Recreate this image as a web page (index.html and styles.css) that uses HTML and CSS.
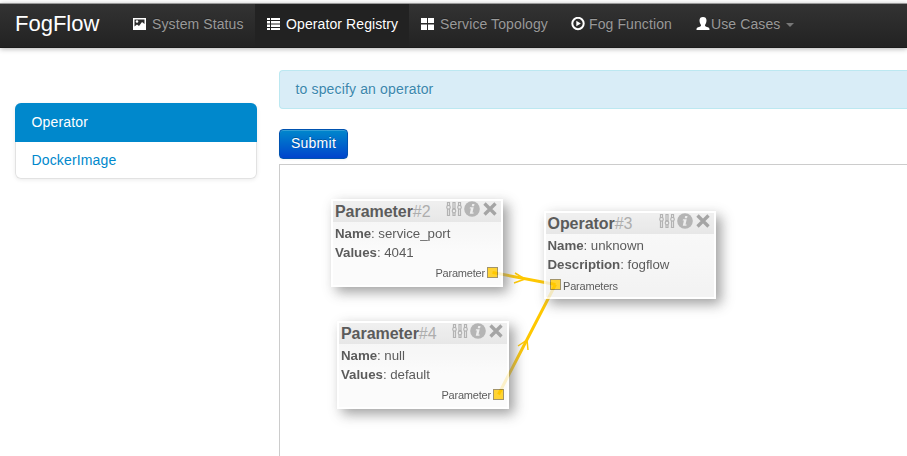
FILE: index.html
```html
<!DOCTYPE html>
<html lang="en">
<head>
<meta charset="utf-8">
<title>FogFlow</title>
<link rel="stylesheet" href="styles.css">
</head>
<body>
<svg class="defs" width="0" height="0">
  <symbol id="tools" viewBox="0 0 16 16">
    <g fill="none" stroke="#a0a0a0" stroke-width="1.200">
      <path d="M1.500 1.500h2v3h-2zM1.500 8v6.500h2V8M7 1.500h2v6H7zM7 12v2.500h2V12M12.500 1.500h2v3h-2zM12.500 8v6.500h2V8"/>
      <circle cx="2.500" cy="6.300" r="1.800"/><circle cx="8" cy="10" r="1.800"/><circle cx="13.500" cy="6.300" r="1.800"/>
    </g>
  </symbol>
  <symbol id="info" viewBox="0 0 16 16">
    <circle cx="8" cy="8" r="7.800" fill="#a3a3a3"/>
    <path d="M8.200 3h2.300l-.5 2.200H7.700zM6 6.300h3.700L8.500 11.500h1.200l-.3 1.200H5.800l1.100-5.100H5.700z" fill="#e9e9e9"/>
  </symbol>
  <symbol id="close" viewBox="0 0 16 16">
    <path d="M2.500 2.500l11 11M13.500 2.500L2.500 13.500" stroke="#8f8f8f" stroke-width="3.300"/>
  </symbol>
</svg>
<header class="navbar">
  <a class="brand">FogFlow</a>
  <nav class="nav">
    <a class="nav-item"><svg class="icon" viewBox="0 0 14 14"><path fill="#fff" fill-rule="evenodd" d="M0 1h13v12H0zM1.500 2.500v7l2.500-2 2 1.500 3-4 2.500 2V2.500z"/><circle cx="4" cy="4.500" r="1.300" fill="#fff"/></svg><span class="label status">System Status</span></a>
    <a class="nav-item active"><svg class="icon" viewBox="0 0 14 14"><path fill="#fff" d="M0 1h3v2H0zM4 1h9v2H4zM0 4h3v2.500H0zM4 4h9v2.500H4zM0 7.500h3V10H0zM4 7.500h9V10H4zM0 11h3v2H0zM4 11h9v2H4z"/></svg><span class="label registry">Operator Registry</span></a>
    <a class="nav-item"><svg class="icon" viewBox="0 0 14 14"><path fill="#fff" d="M0 1h6v5H0zM7 1h6v5H7zM0 7.500h6V13H0zM7 7.500h6V13H7z"/></svg><span class="label topology">Service Topology</span></a>
    <a class="nav-item"><svg class="icon" viewBox="0 0 14 14"><circle cx="7" cy="6.500" r="5.700" fill="none" stroke="#fff" stroke-width="2"/><path d="M5.300 3.700v5.600l4.500-2.800z" fill="#fff"/></svg><span class="label function">Fog Function</span></a>
    <a class="nav-item user"><svg class="icon" viewBox="0 0 14 14"><path fill="#fff" d="M3.500 3.500C3.500 1 4.800 0 7 0s3.500 1 3.500 3.500C10.500 6 9.500 7 9 8c-.3 1.500 1.500 1.800 3 2.200 1.300.5 1.500 1.300 1.500 2.800H.5c0-1.500.2-2.300 1.500-2.800C3.500 9.800 5.300 9.500 5 8 4.500 7 3.500 6 3.500 3.500z"/></svg><span class="label cases">Use Cases</span><span class="caret"></span></a>
  </nav>
</header>
<div class="page">
  <aside class="sidebar">
    <a class="side-item selected">Operator</a>
    <a class="side-item">DockerImage</a>
  </aside>
  <main class="content">
    <div class="alert">to specify an operator</div>
    <button class="submit">Submit</button>
    <div class="board">
      <svg class="wires" width="628" height="292" viewBox="279 164 628 292">
        <g fill="none" stroke="#ffc800">
          <path stroke-width="3" d="M492.500 272.500L555.500 284.500M498.500 394.500L555.500 284.500"/>
          <path stroke-width="1.500" d="M515 273l10 6-11 4M518 346l9-6 1 10"/>
        </g>
      </svg>
      <section class="node node-2">
        <div class="node-head"><b>Parameter</b><span class="num">#2</span><span class="tools"><svg><use href="#tools"/></svg><svg><use href="#info"/></svg><svg><use href="#close"/></svg></span></div>
        <div class="row"><b>Name</b>: service_port</div>
        <div class="row"><b>Values</b>: 4041</div>
        <div class="port out">Parameter<i class="pin"></i></div>
      </section>
      <section class="node node-3">
        <div class="node-head"><b>Operator</b><span class="num">#3</span><span class="tools"><svg><use href="#tools"/></svg><svg><use href="#info"/></svg><svg><use href="#close"/></svg></span></div>
        <div class="row"><b>Name</b>: unknown</div>
        <div class="row"><b>Description</b>: fogflow</div>
        <div class="port in"><i class="pin"></i>Parameters</div>
      </section>
      <section class="node node-4">
        <div class="node-head"><b>Parameter</b><span class="num">#4</span><span class="tools"><svg><use href="#tools"/></svg><svg><use href="#info"/></svg><svg><use href="#close"/></svg></span></div>
        <div class="row"><b>Name</b>: null</div>
        <div class="row"><b>Values</b>: default</div>
        <div class="port out">Parameter<i class="pin"></i></div>
      </section>
    </div>
  </main>
</div>
</body>
</html>
```
FILE: styles.css
```css
* { box-sizing: border-box; }
body {
  margin: 0;
  height: 456px;
  overflow: hidden;
  background: #fff;
  font: 14px/20px "Liberation Sans", Arial, sans-serif;
  color: #333;
}
.defs { position: absolute; }
.navbar {
  display: flex;
  margin-top: 3px;
  height: 45px;
  border-top: 1px solid #999;
  border-bottom: 1px solid #1b1b1b;
  background: linear-gradient(#333, #222);
  box-shadow: 0 1px 5px rgba(0, 0, 0, .3);
}
.brand {
  width: 118px;
  padding: 10px 0 0 15px;
  font-size: 22px;
  color: #fff;
}
.nav { display: flex; }
.nav-item {
  display: flex;
  align-items: flex-start;
  padding: 10px 12px 0 15px;
  color: #999;
  letter-spacing: .1px;
  text-shadow: 0 -1px 0 rgba(0, 0, 0, .25);
}
.nav-item.active {
  padding-left: 12px;
  color: #fff;
  background: #222;
}
.nav-item.active + .nav-item { padding-left: 12px; }
.icon { width: 14px; height: 14px; margin-top: 3px; flex: none; }
.label { margin-left: 5px; white-space: nowrap; }
.status { width: 91px; }
.registry { width: 111px; }
.topology { width: 104px; }
.function { width: 84px; margin-left: 4px; }
.cases { width: 71px; margin-left: 1px; }
.nav-item.user { padding-left: 11px; }
.caret {
  margin: 9px 0 0 4px;
  border: 4px solid transparent;
  border-top-color: #777;
  border-bottom: 0;
}
.page { display: flex; padding-left: 15px; }
.sidebar {
  width: 242px;
  height: 76px;
  margin-top: 55px;
  border-radius: 6px;
  box-shadow: inset 0 0 0 1px #e2e2e2, 0 1px 4px rgba(0, 0, 0, .08);
}
.side-item {
  display: block;
  height: 37px;
  padding: 8px 16.5px;
  color: #08c;
  letter-spacing: .15px;
}
.side-item.selected {
  height: 39px;
  padding-top: 9px;
  border-radius: 6px 6px 0 0;
  background: #08c;
  color: #fff;
}
.content { flex: 1; margin: 22px 0 0 22px; }
.alert {
  height: 39px;
  padding: 8px 15.5px;
  border: 1px solid #bce8f1;
  border-right: 0;
  border-radius: 4px 0 0 4px;
  background: #d9edf7;
  color: #3a87ad;
  letter-spacing: .15px;
  text-shadow: 0 1px 0 rgba(255, 255, 255, .5);
}
.submit {
  display: block;
  width: 69px;
  height: 30px;
  margin: 20px 0 5px;
  padding: 0 0 2px;
  border: 1px solid #0052b0;
  border-radius: 4px;
  background: linear-gradient(#08c, #04c);
  box-shadow: inset 0 1px 0 rgba(255, 255, 255, .2), 0 1px 2px rgba(0, 0, 0, .05);
  color: #fff;
  font: inherit;
  letter-spacing: .25px;
  text-shadow: 0 -1px 0 rgba(0, 0, 0, .25);
}
.board {
  position: relative;
  height: 300px;
  border: 1px solid #ccc;
  border-right: 0;
}
.wires { position: absolute; top: -1px; left: -1px; }
.node {
  position: absolute;
  width: 172px;
  height: 88px;
  border: 2px solid #fff;
  box-shadow: 5px 5px 12px #888;
  opacity: .8;
}
.node-2 { left: 51px; top: 34px; }
.node-3 { left: 264px; top: 46px; }
.node-4 { left: 57px; top: 156px; }
.node-2, .node-4 { background: linear-gradient(#f0f0f0, #fafafa 60%); }
.node-3 { background: linear-gradient(#fafafa, #f0f0f0); }
.node-head {
  display: flex;
  height: 21px;
  padding: 1px 0 0 2px;
  background: linear-gradient(#ececec, #e2e2e2);
  font-size: 16px;
  letter-spacing: -.05px;
}
.node-3 .node-head, .node-3 .row { padding-left: 1.5px; }
.num { color: #999; }
.tools { display: flex; gap: 2px; margin: -1px 3px 0 auto; }
.tools svg { width: 16px; height: 16px; }
.node-head + .row { margin-top: 1px; }
.row {
  height: 19px;
  padding: 1px 0 0 2px;
  font-size: 13.3px;
  line-height: 19px;
  letter-spacing: -.04px;
}
.port {
  display: flex;
  align-items: flex-start;
  height: 22px;
  font-size: 11px;
  letter-spacing: -.2px;
}
.port.out { justify-content: flex-end; padding: 2px 3px 0 0; }
.port.in { padding: 3px 0 0 4px; }
.pin {
  width: 11px;
  height: 11px;
  margin: 3px 0 0 2px;
  border: 1px solid #8b7a45;
  background: #ffc800;
}
.node-4 .pin { margin-top: 4px; }
.node-4 .port { padding-top: 2px; }
.in .pin { margin: 3px 2px 0 0; }
.node-2 .pin { margin-top: 4px; }
```
